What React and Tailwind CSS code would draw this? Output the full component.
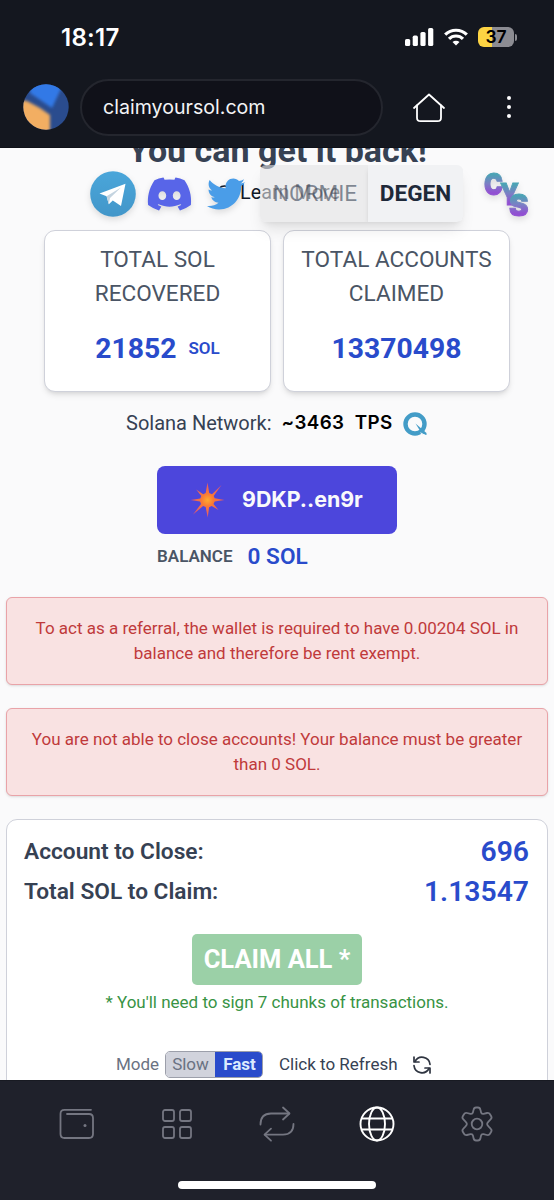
import { FaDiscord, FaTwitter } from 'react-icons/fa';

const alerts = [
  ['To act as a referral, the wallet is required to have 0.00204 SOL in', 'balance and therefore be rent exempt.'],
  ['You are not able to close accounts! Your balance must be greater', 'than 0 SOL.'],
];

const totals = [
  { label: 'Account to Close:', value: '696' },
  { label: 'Total SOL to Claim:', value: '1.13547' },
];

function StatusBar() {
  return (
    <div className="flex h-[74px] items-center justify-between pl-[61px] pr-[37px]">
      <span className="pt-[1px] font-['Inter'] text-[24px] font-semibold tracking-[0.3px] text-white">18:17</span>
      <div className="flex items-center gap-[10px]">
        <svg width="29" height="18" viewBox="0 0 29 18" fill="#fff">
          <rect x="0" y="11" width="5.2" height="7" rx="1.6" />
          <rect x="7.7" y="7.6" width="5.2" height="10.4" rx="1.6" />
          <rect x="15.4" y="4" width="5.2" height="14" rx="1.6" />
          <rect x="23.1" y="0" width="5.2" height="18" rx="1.6" />
        </svg>
        <svg width="24" height="18" viewBox="0 0 24 18" fill="none" stroke="#fff" strokeWidth="3.2">
          <path d="M1.2 6.7a15.3 15.3 0 0 1 21.6 0" />
          <path d="M5 10.9a9.9 9.9 0 0 1 14 0" />
          <path d="M12 17.6l-3.5-3.5a5 5 0 0 1 7 0z" fill="#fff" stroke="none" />
        </svg>
        <div className="flex items-center gap-[1px]">
          <div className="flex h-5 w-9 items-center justify-center rounded-[6px] bg-[linear-gradient(90deg,#fdd443_38%,#8c8c92_38%)]">
            <span className="font-['Inter'] text-[17.5px] font-semibold leading-none text-black">37</span>
          </div>
          <div className="h-[7px] w-[2px] rounded-r-full bg-[#8c8c92]" />
        </div>
      </div>
    </div>
  );
}

function AddressBar() {
  return (
    <div className="flex h-[66px] items-center pl-[23px]">
      <svg width="46" height="46" viewBox="0 0 46 46">
        <defs>
          <clipPath id="avatar">
            <circle cx="23" cy="23" r="22.7" />
          </clipPath>
          <filter id="soft">
            <feGaussianBlur stdDeviation="1.8" />
          </filter>
        </defs>
        <g clipPath="url(#avatar)">
          <rect width="46" height="46" fill="#2a4c8e" />
          <g filter="url(#soft)">
            <path d="M8 -4h34L29 24 7 9z" fill="#3279e6" />
            <path d="M-4 16L4 17l13 7 10 7v19H-4z" fill="#f2ae62" />
          </g>
        </g>
      </svg>
      <div className="ml-[11px] flex h-[57px] w-[303px] items-center rounded-full border-2 border-[#24262e] bg-[#101119] pl-[21px]">
        <span className="pt-[2px] font-['Inter'] text-[19.6px] font-normal text-gray-100">claimyoursol.com</span>
      </div>
      <svg className="ml-[29px] mt-[1px]" width="34" height="30" viewBox="0 0 34 30" fill="none" stroke="#fff" strokeWidth="1.8" strokeLinecap="round" strokeLinejoin="round">
        <path d="M2 15L17 1.5 32 15" />
        <path d="M5 12.5v12.2c0 2.3 1.2 3.5 3.5 3.5h17c2.3 0 3.5-1.2 3.5-3.5V12.5" />
      </svg>
      <div className="ml-[61px] flex flex-col gap-[5px]">
        <span className="size-1 rounded-full bg-white" />
        <span className="size-1 rounded-full bg-white" />
        <span className="size-1 rounded-full bg-white" />
      </div>
    </div>
  );
}

function TelegramLogo() {
  return (
    <svg className="drop-shadow-md" width="46" height="46" viewBox="0 0 46 46">
      <defs>
        <linearGradient id="tg" x1="0" y1="0" x2="0" y2="1">
          <stop offset="0" stopColor="#4aa6da" />
          <stop offset="1" stopColor="#4296c9" />
        </linearGradient>
      </defs>
      <circle cx="23" cy="23" r="22.8" fill="url(#tg)" />
      <path d="M9.5 22.5L35.5 12.8 31 35l-8.2-5.6-4 3.8-2.2-8z" fill="#fff" />
      <path d="M16.6 25.2L31 16.5 20 27l-1.2 6.2z" fill="#c4d4e0" />
    </svg>
  );
}

function SiteLogo() {
  return (
    <svg className="drop-shadow-md" width="56" height="63" viewBox="-4 -8 56 63" fontFamily="Inter, sans-serif" fontWeight="900">
      <defs>
        <linearGradient id="cys" x1="0" y1="0" x2="0" y2="1">
          <stop offset="0.25" stopColor="#4ba3b5" />
          <stop offset="0.5" stopColor="#7a7fc4" />
          <stop offset="0.75" stopColor="#9150d2" />
        </linearGradient>
      </defs>
      <g fill="url(#cys)" stroke="url(#cys)" strokeWidth="1">
        <text x="1" y="24.5" fontSize="30" textLength="19" lengthAdjust="spacingAndGlyphs">C</text>
        <text x="17" y="34.5" fontSize="30" textLength="19" lengthAdjust="spacingAndGlyphs">Y</text>
        <text x="26" y="45.5" fontSize="30" textLength="19.5" lengthAdjust="spacingAndGlyphs">S</text>
      </g>
    </svg>
  );
}

function FloatingBar() {
  return (
    <div className="absolute left-[90px] top-[14px] z-10 flex h-[63px] items-center">
      <TelegramLogo />
      <FaDiscord className="ml-[10px] h-[46px] w-[47px] text-[#5865e8] drop-shadow-md" />
      <FaTwitter className="ml-[14px] size-[38px] text-[#4a9de8] drop-shadow-md" />
      <div className="ml-[15px] flex h-[57px] w-[203px] overflow-hidden rounded-md shadow-lg">
        <div className="flex w-[108px] items-center justify-center bg-[#e3e3e4]/60 pl-[2px] text-[22.6px] text-gray-700/60">
          NORMIE
        </div>
        <div className="flex w-[95px] items-center justify-center bg-[#f1f2f4] text-[22.6px] font-bold text-gray-800 shadow-md">
          DEGEN
        </div>
      </div>
      <div className="ml-[16px]">
        <SiteLogo />
      </div>
    </div>
  );
}

function StatCard({ lines, value, unit }) {
  return (
    <div className="flex h-[162px] flex-1 flex-col items-center rounded-[11px] border-[1.5px] border-[#cfd1da] bg-white pt-[12px] shadow-md">
      <div className="text-center text-[22.6px] leading-[34px] text-gray-600">
        {lines.map((line) => (
          <div key={line}>{line}</div>
        ))}
      </div>
      <div className="mt-[17px] flex items-center gap-3 text-[28.3px] font-bold leading-[42px] text-[#294bcb]">
        {value}
        {unit && <span className="-mt-[2px] text-[17px] font-semibold">{unit}</span>}
      </div>
    </div>
  );
}

function WalletButton() {
  return (
    <button className="flex h-[68px] w-[240px] items-center rounded-lg bg-[#4c46dc] pl-[33px]">
      <svg width="35" height="36" viewBox="0 0 35 36">
        <defs>
          <radialGradient id="flare">
            <stop offset="0" stopColor="#ffab2e" />
            <stop offset="0.35" stopColor="#f97a35" />
            <stop offset="1" stopColor="#e5576c" />
          </radialGradient>
        </defs>
        <path
          d="M17.5 0.5l1.7 10.5 2.8 1.2L31.5 3l-7.8 11 1 2.3 9.8 1.7-9.8 1.5-1.2 2.5 5 6-6.8-4-2.6 1.2L17.7 35.5l-2-10.4-2.6-1L3 32.5l8-10.5-.9-2.4L.5 18l9.8-1.5 1-2.5-5.1-6.5 7 4.7 2.5-1.2z"
          fill="url(#flare)"
        />
      </svg>
      <span className="ml-[17px] pb-[2px] font-['Inter'] text-[21.4px] font-bold text-gray-50">9DKP..en9r</span>
    </button>
  );
}

function RefreshIcon() {
  return (
    <svg width="20" height="20" viewBox="0 0 20 20" fill="none" stroke="#2f3541" strokeWidth="1.7" strokeLinecap="round" strokeLinejoin="round">
      <path d="M2 2v5h5" />
      <path d="M3 6.5a8 8 0 0 1 15 2.8" />
      <path d="M18 18v-5h-5" />
      <path d="M17 13.5A8 8 0 0 1 2 10.7" />
    </svg>
  );
}

function BottomNav() {
  return (
    <nav className="flex h-[120px] flex-col items-center border-t border-[#181a22] bg-[#1f212b]">
      <div className="flex h-[86px] w-full items-center pl-[58px] text-[#747681]">
        <svg width="36" height="32" viewBox="0 0 36 32" fill="none" stroke="currentColor" strokeWidth="1.8" strokeLinecap="round">
          <path d="M33 1.8H6.500C3.700 1.800 2.500 3.200 2.500 6v20c0 2.800 1.400 4 4 4h24.500c2.800 0 4-1.300 4-4V10c0-2.800-1.300-4-4-4H9" />
          <circle cx="27" cy="17.500" r="1.500" fill="currentColor" stroke="none" />
        </svg>
        <svg className="ml-[68px]" width="30" height="30" viewBox="0 0 30 30" fill="none" stroke="currentColor" strokeWidth="1.8">
          <rect x="1" y="1" width="11" height="11" rx="2" />
          <rect x="18" y="1" width="11" height="11" rx="2" />
          <rect x="1" y="18" width="11" height="11" rx="2" />
          <rect x="18" y="18" width="11" height="11" rx="2" />
        </svg>
        <svg className="ml-[67px]" width="36" height="36" viewBox="0 0 36 36" fill="none" stroke="currentColor" strokeWidth="1.8" strokeLinecap="round" strokeLinejoin="round">
          <path d="M1.500 18.500C1.500 11.500 5 7.500 12 7.500h18" />
          <path d="M24 1.500l6.500 6L24 13.500" />
          <path d="M34.500 18c0 7-3.500 10.700-10.500 10.700H6" />
          <path d="M12 22.700l-6.500 6 6.500 6" />
        </svg>
        <svg className="ml-[64px] text-white" width="36" height="36" viewBox="0 0 36 36" fill="none" stroke="currentColor" strokeWidth="1.900">
          <circle cx="18" cy="18" r="16.500" />
          <ellipse cx="18" cy="18" rx="8" ry="16.500" />
          <path d="M2.500 12.500h31M2.500 23.500h31" />
        </svg>
        <svg className="ml-[65px]" width="34" height="36" viewBox="0 0 34 36" fill="none" stroke="currentColor" strokeWidth="1.800" strokeLinejoin="round">
          <path d="M13.500 4Q14 1.500 16 1.500h2q2 0 2.500 2.500l.5 2.200q.5 2 2.500 1.600l3.500-.8q2-.5 3 1.200l1.200 2.100q1 1.700-.6 3.100l-1.900 1.900q-1.600 1.700-1.600 2.700t1.600 2.700l1.900 1.900q1.600 1.400.6 3.100L30 27.800q-1 1.700-3 1.200l-3.500-.8q-2-.4-2.500 1.600l-.5 2.200q-.5 2.500-2.500 2.500h-2q-2 0-2.500-2.500l-.5-2.200q-.5-2-2.500-1.600L7 29q-2 .5-3-1.200l-1.200-2.100q-1-1.700.6-3.100l1.900-1.900Q6.900 19 6.900 18t-1.600-2.700l-1.900-1.900q-1.600-1.400-.6-3.100L4 8.200Q5 6.500 7 7l3.500.8q2 .4 2.500-1.600z" />
          <circle cx="17" cy="18" r="5.300" />
        </svg>
      </div>
      <div className="mt-[14px] h-2 w-[198px] rounded-full bg-white" />
    </nav>
  );
}

export default function App() {
  return (
    <div className="flex h-[1200px] w-[554px] flex-col overflow-hidden bg-[#fafafb] font-['Roboto',sans-serif]">
      <header className="h-[148px] shrink-0 border-b border-[#0f1118] bg-[#14171f]">
        <StatusBar />
        <AddressBar />
      </header>

      <main className="relative h-[932px] shrink-0 overflow-hidden">
        <FloatingBar />

        <h1 className="-mt-[18px] text-center text-[34px] font-bold leading-[40px] text-gray-700">
          <span className="ml-[1px]">You can get it back!</span>
        </h1>
        <div className="mt-[10px] flex h-[26px] items-center gap-[7px] pl-[216px] text-[19.8px] text-gray-900">
          <svg width="17" height="17" viewBox="0 0 17 17" fill="none" stroke="currentColor" strokeWidth="1.600">
            <circle cx="8.500" cy="8.500" r="7.500" />
            <path d="M8.500 7.500v5M8.500 4.500v1.500" />
          </svg>
          Learn More
        </div>

        {/* Stats */}
        <section className="mt-[24px] flex gap-[12px] px-[44px]">
          <StatCard lines={['TOTAL SOL', 'RECOVERED']} value="21852" unit="SOL" />
          <StatCard lines={['TOTAL ACCOUNTS', 'CLAIMED']} value="13370498" />
        </section>

        <div className="mt-[16px] flex h-[30px] items-center pl-[126px]">
          <span className="text-[20px] text-gray-700">Solana Network:</span>
          <span className="ml-[10px] whitespace-pre pt-[1px] font-['Inter'] text-[18.8px] font-semibold tracking-[0.4px] text-black">~3463  TPS</span>
          <svg className="ml-[10px] mt-[1px]" width="24" height="24" viewBox="0 0 24 24">
            <circle cx="12" cy="12" r="9.500" fill="none" stroke="#439cc7" strokeWidth="4.400" />
            <path d="M12.500 11.500l11 9.500v2l-4.500-1z" fill="#439cc7" />
            <path d="M17.500 20.800l5.500 3" stroke="#fafafb" strokeWidth="1" />
          </svg>
        </div>

        {/* Wallet */}
        <section className="mt-[28px] flex flex-col items-start pl-[157px]">
          <WalletButton />
          <div className="mt-[6px] flex h-[33px] items-center gap-[15px]">
            <span className="text-[17px] font-semibold text-gray-600">BALANCE</span>
            <span className="text-[22.6px] font-semibold text-[#294bcb]">0 SOL</span>
          </div>
        </section>

        <section className="mt-[24px] flex flex-col gap-[23px] px-[6px]">
          {alerts.map((lines) => (
            <div
              key={lines[0]}
              className="flex h-[88px] flex-col items-center justify-center rounded-md border border-[#e9a3a8] bg-[#f9e2e2] text-[17px] leading-[25.5px] text-[#c03a3b] shadow"
            >
              {lines.map((line) => (
                <div key={line} className="whitespace-nowrap">{line}</div>
              ))}
            </div>
          ))}
        </section>

        {/* Claim card */}
        <section className="mx-[6px] mt-[23px] flex h-[300px] flex-col items-center rounded-[11px] border border-[#cfd1da] bg-white pt-[12px]">
          {totals.map((row) => (
            <div key={row.label} className="flex h-10 w-full items-center justify-between pl-[17px] pr-[18px]">
              <span className="text-[22.7px] font-semibold text-gray-700">{row.label}</span>
              <span className="text-[28.3px] font-semibold text-[#294bcb]">{row.value}</span>
            </div>
          ))}
          <button className="mt-[22px] h-[51px] w-[170px] rounded-[5px] bg-[#9bd0a7] text-[25.5px] font-bold text-white">
            CLAIM ALL *
          </button>
          <p className="mt-[4px] text-[17px] leading-[26px] text-[#389344]">* You'll need to sign 7 chunks of transactions.</p>
          <div className="mt-[36px] flex w-full items-center pl-[109px] text-[17px]">
            <span className="w-[43px] text-gray-500">Mode</span>
            <div className="ml-[6px] flex h-[27px] w-[98px] overflow-hidden rounded-[5px] border-[1.5px] border-[#9c9faa]">
              <span className="flex w-[49px] items-center justify-center bg-[#d1d3dc] text-gray-500">Slow</span>
              <span className="-my-[2px] -mr-[2px] flex flex-1 items-center justify-center bg-[#294bcb] font-bold text-blue-100">Fast</span>
            </div>
            <span className="ml-[16px] text-gray-700">Click to Refresh</span>
            <span className="ml-[14px]">
              <RefreshIcon />
            </span>
          </div>
        </section>
      </main>

      <BottomNav />
    </div>
  );
}
